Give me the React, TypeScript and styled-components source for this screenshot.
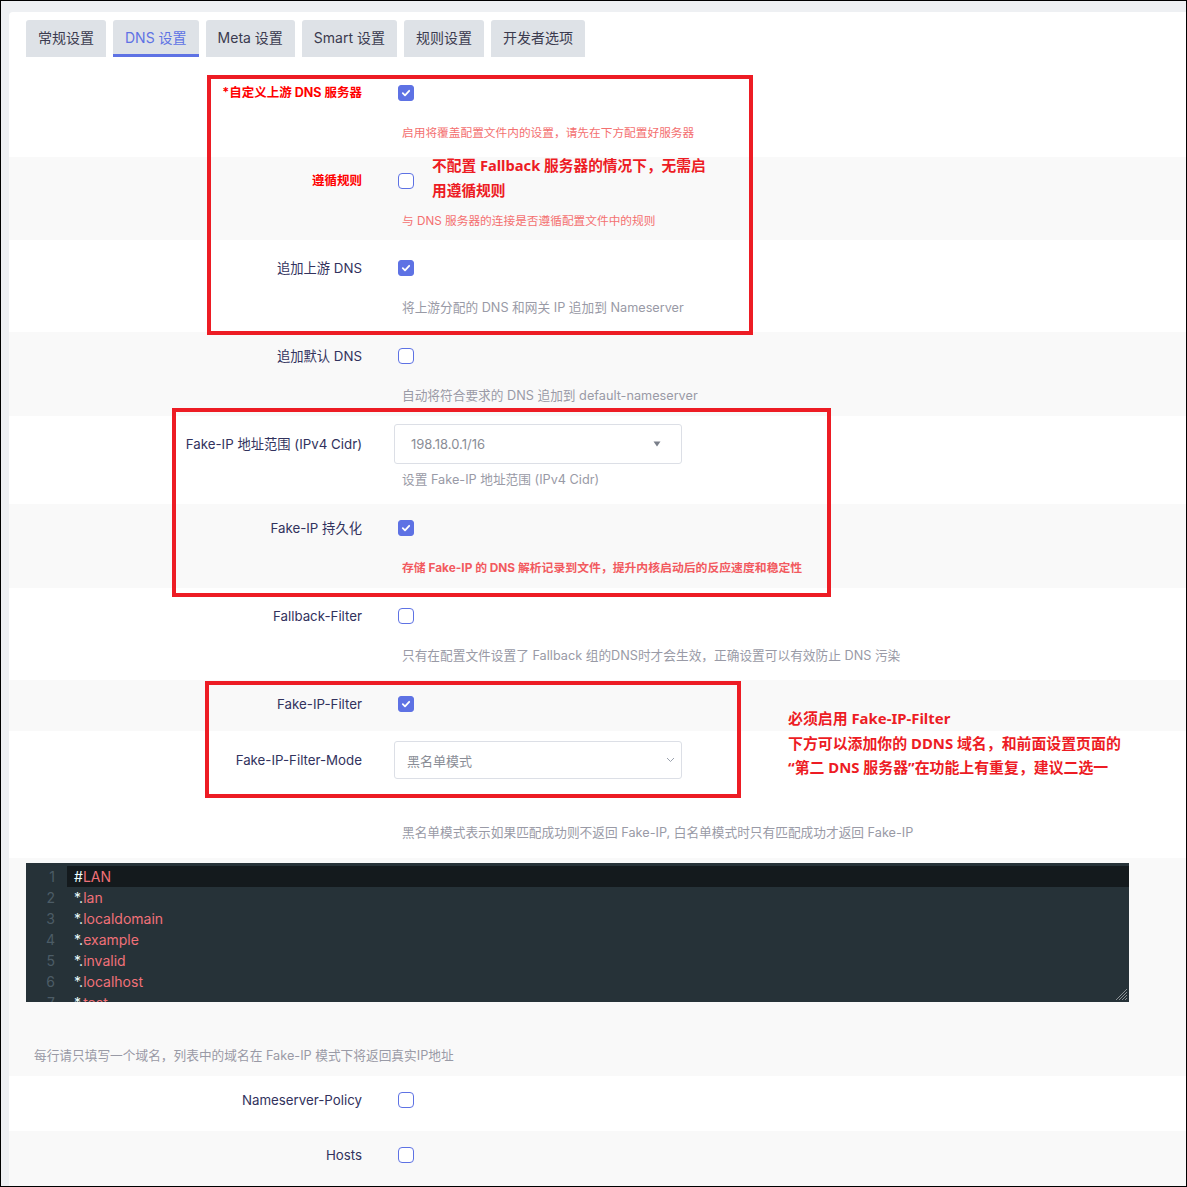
import styled, { createGlobalStyle } from "styled-components";

const GlobalStyle = createGlobalStyle`
  html, body {
    margin: 0;
    padding: 0;
  }
  body {
    font-family: Inter, "Noto Sans CJK SC", sans-serif;
    background: #fff;
  }
`;

const Frame = styled.div`
  position: relative;
  box-sizing: border-box;
  width: 1187px;
  height: 1187px;
  overflow: hidden;
  border: 1px solid #000;
  background: #eef0f3;
  padding: 11px 0 0 8px;
`;

const Card = styled.div`
  background: #fff;
  border-top-left-radius: 4px;
  padding-top: 8px;
  min-height: 100%;
`;

const Tabs = styled.div`
  display: flex;
  gap: 7px;
  padding: 0 17px;
`;

const Tab = styled.div<{ $active?: boolean }>`
  box-sizing: border-box;
  height: 37px;
  display: flex;
  align-items: center;
  padding: 0 12px 3px;
  background: #dee2e7;
  border-radius: 3px 3px 0 0;
  font-size: 14px;
  color: ${(p) => (p.$active ? "#5e72e4" : "#3b3b4f")};
  box-shadow: ${(p) => (p.$active ? "inset 0 -3px 0 #5e72e4" : "none")};
`;

const Rows = styled.div`
  & > *:nth-child(even) {
    background: #f9f9f9;
  }
`;

const Row = styled.div<{ $pt: number; $h: number }>`
  box-sizing: border-box;
  height: ${(p) => p.$h}px;
  padding-top: ${(p) => p.$pt}px;
  display: grid;
  grid-template-columns: 353px 1fr;
  column-gap: 32px;
  align-items: start;
`;

const Label = styled.div<{ $line?: number; $alert?: boolean }>`
  text-align: right;
  white-space: nowrap;
  font-size: ${(p) => (p.$alert ? 12.5 : 13.3)}px;
  line-height: ${(p) => p.$line ?? 24}px;
  color: ${(p) => (p.$alert ? "#ff0000" : "#32325d")};
  font-weight: ${(p) => (p.$alert ? 700 : 400)};
`;

const Field = styled.div`
  display: flex;
  flex-direction: column;
  align-items: flex-start;
`;

const CheckLine = styled.div`
  height: 24px;
  display: flex;
  align-items: center;
  padding-left: 4px;
`;

const Box = styled.span<{ $on?: boolean }>`
  box-sizing: border-box;
  width: 16px;
  height: 16px;
  border-radius: ${(p) => (p.$on ? 3 : 4)}px;
  background: ${(p) => (p.$on ? "#5e72e4" : "#fff")};
  border: 1px solid #5e72e4;
  display: flex;
  align-items: center;
  justify-content: center;
`;

type Tone = "gray" | "red" | "strong";

const toneColor: Record<Tone, string> = {
  gray: "#999aa6",
  red: "#f47070",
  strong: "#f25a5f",
};

const toneSize: Record<Tone, number> = {
  gray: 12.7,
  red: 11.7,
  strong: 11.85,
};

const Desc = styled.div<{ $mt?: number; $tone?: Tone }>`
  margin-top: ${(p) => p.$mt ?? 20}px;
  padding-left: 8px;
  font-size: ${(p) => toneSize[p.$tone ?? "gray"]}px;
  line-height: 16px;
  white-space: nowrap;
  color: ${(p) => toneColor[p.$tone ?? "gray"]};
  font-weight: ${(p) => (p.$tone === "strong" ? 700 : 400)};
`;

const Combo = styled.div<{ $h: number; $pl: number; $pr: number }>`
  box-sizing: border-box;
  width: 288px;
  height: ${(p) => p.$h}px;
  border: 1px solid #dcdfe6;
  border-radius: 3px;
  background: #fff;
  display: flex;
  align-items: center;
  justify-content: space-between;
  padding: 0 ${(p) => p.$pr}px 0 ${(p) => p.$pl}px;
  font-size: 13px;
  color: #8a8d96;
`;

const EditorSection = styled.div`
  box-sizing: border-box;
  height: 218px;
  padding: 5px 0 0 17px;
`;

const Editor = styled.div`
  position: relative;
  box-sizing: border-box;
  width: 1103px;
  height: 139px;
  background: #263238;
  padding-top: 3px;
  overflow: hidden;
  font-family: Inter, sans-serif;
  font-size: 14px;
`;

const CodeLine = styled.div`
  display: flex;
  height: 21px;
  line-height: 21px;
`;

const Gutter = styled.span`
  box-sizing: border-box;
  width: 41px;
  flex: none;
  padding-right: 12px;
  text-align: right;
  color: #4c5c66;
`;

const Code = styled.span<{ $active?: boolean }>`
  flex: 1;
  padding-left: 7px;
  color: #f07178;
  background: ${(p) => (p.$active ? "#141a1d" : "transparent")};
`;

const Punct = styled.span`
  color: #eeffff;
`;

const Grip = styled.svg`
  position: absolute;
  right: 1px;
  bottom: 1px;
`;

const Hint = styled.div`
  margin-top: 46px;
  padding-left: 8px;
  font-size: 12.7px;
  line-height: 16px;
  color: #999aa6;
`;

const Mark = styled.div<{ $x: number; $y: number; $w: number; $h: number }>`
  position: absolute;
  left: ${(p) => p.$x}px;
  top: ${(p) => p.$y}px;
  width: ${(p) => p.$w}px;
  height: ${(p) => p.$h}px;
  box-sizing: border-box;
  border: 4px solid #ed1c24;
  pointer-events: none;
`;

const Note = styled.div<{ $x: number; $y: number; $size: number; $line: number }>`
  position: absolute;
  left: ${(p) => p.$x}px;
  top: ${(p) => p.$y}px;
  font-family: "Noto Sans", "Noto Sans CJK SC", sans-serif;
  font-weight: 700;
  font-size: ${(p) => p.$size}px;
  line-height: ${(p) => p.$line}px;
  color: #ed1c24;
  white-space: nowrap;
`;

function Check({ on }: { on?: boolean }) {
  return (
    <CheckLine>
      <Box $on={on}>
        {on && (
          <svg width="10" height="10" viewBox="0 0 10 10">
            <path d="M1.8 5.2 L4 7.3 L8.2 2.8" fill="none" stroke="#fff" strokeWidth="1.8" strokeLinecap="round" strokeLinejoin="round" />
          </svg>
        )}
      </Box>
    </CheckLine>
  );
}

const codeLines = [
  ["#", "LAN"],
  ["*.", "lan"],
  ["*.", "localdomain"],
  ["*.", "example"],
  ["*.", "invalid"],
  ["*.", "localhost"],
  ["*.", "test"],
];

const tabs = ["常规设置", "DNS 设置", "Meta 设置", "Smart 设置", "规则设置", "开发者选项"];

export default function App() {
  return (
    <>
      <GlobalStyle />
      <Frame>
        <Card>
          <Tabs>
            {tabs.map((t) => (
              <Tab key={t} $active={t === "DNS 设置"}>
                {t}
              </Tab>
            ))}
          </Tabs>
          <Rows>
            <Row $pt={24} $h={100}>
              <Label $alert>*自定义上游 DNS 服务器</Label>
              <Field>
                <Check on />
                <Desc $tone="red">启用将覆盖配置文件内的设置，请先在下方配置好服务器</Desc>
              </Field>
            </Row>
            <Row $pt={12} $h={83}>
              <Label $alert>遵循规则</Label>
              <Field>
                <Check />
                <Desc $tone="red">与 DNS 服务器的连接是否遵循配置文件中的规则</Desc>
              </Field>
            </Row>
            <Row $pt={16} $h={92}>
              <Label>追加上游 DNS</Label>
              <Field>
                <Check on />
                <Desc>将上游分配的 DNS 和网关 IP 追加到 Nameserver</Desc>
              </Field>
            </Row>
            <Row $pt={12} $h={84}>
              <Label>追加默认 DNS</Label>
              <Field>
                <Check />
                <Desc>自动将符合要求的 DNS 追加到 default-nameserver</Desc>
              </Field>
            </Row>
            <Row $pt={8} $h={88}>
              <Label $line={40}>Fake-IP 地址范围 (IPv4 Cidr)</Label>
              <Field>
                <Combo $h={40} $pl={16} $pr={20}>
                  <span>198.18.0.1/16</span>
                  <svg width="8" height="6" viewBox="0 0 8 6">
                    <path d="M0.5 0.5 H7.5 L4 5.5 Z" fill="#7a7f8a" />
                  </svg>
                </Combo>
                <Desc $mt={8}>设置 Fake-IP 地址范围 (IPv4 Cidr)</Desc>
              </Field>
            </Row>
            <Row $pt={12} $h={84}>
              <Label>Fake-IP 持久化</Label>
              <Field>
                <Check on />
                <Desc $tone="strong">存储 Fake-IP 的 DNS 解析记录到文件，提升内核启动后的反应速度和稳定性</Desc>
              </Field>
            </Row>
            <Row $pt={16} $h={92}>
              <Label>Fallback-Filter</Label>
              <Field>
                <Check />
                <Desc>只有在配置文件设置了 Fallback 组的DNS时才会生效，正确设置可以有效防止 DNS 污染</Desc>
              </Field>
            </Row>
            <Row $pt={12} $h={51}>
              <Label>Fake-IP-Filter</Label>
              <Field>
                <Check on />
              </Field>
            </Row>
            <Row $pt={10} $h={127}>
              <Label $line={38}>Fake-IP-Filter-Mode</Label>
              <Field>
                <Combo $h={38} $pl={12} $pr={6}>
                  <span>黑名单模式</span>
                  <svg width="9" height="6" viewBox="0 0 9 6">
                    <path d="M1 1 L4.5 4.5 L8 1" fill="none" stroke="#9aa1ad" strokeWidth="1" />
                  </svg>
                </Combo>
                <Desc $mt={46}>黑名单模式表示如果匹配成功则不返回 Fake-IP, 白名单模式时只有匹配成功才返回 Fake-IP</Desc>
              </Field>
            </Row>
            <EditorSection>
              <Editor>
                {codeLines.map(([p, rest], i) => (
                  <CodeLine key={i}>
                    <Gutter>{i + 1}</Gutter>
                    <Code $active={i === 0}>
                      <Punct>{p}</Punct>
                      {rest}
                    </Code>
                  </CodeLine>
                ))}
                <Grip width="12" height="12" viewBox="0 0 12 12">
                  <path d="M11 3 L3 11 M11 6 L6 11 M11 9 L9 11 M11 0 L0 11" stroke="#8a9094" strokeWidth="1" />
                </Grip>
              </Editor>
              <Hint>每行请只填写一个域名，列表中的域名在 Fake-IP 模式下将返回真实IP地址</Hint>
            </EditorSection>
            <Row $pt={12} $h={55}>
              <Label>Nameserver-Policy</Label>
              <Field>
                <Check />
              </Field>
            </Row>
            <Row $pt={12} $h={56}>
              <Label>Hosts</Label>
              <Field>
                <Check />
              </Field>
            </Row>
          </Rows>
        </Card>
        <Mark $x={206} $y={74} $w={546} $h={260} />
        <Mark $x={171} $y={407} $w={659} $h={189} />
        <Mark $x={204} $y={680} $w={536} $h={117} />
        <Note $x={431} $y={152} $size={14.7} $line={25}>
          <div>不配置 Fallback 服务器的情况下，无需启</div>
          <div>用遵循规则</div>
        </Note>
        <Note $x={787} $y={705} $size={14.9} $line={24.5}>
          <div>必须启用 Fake-IP-Filter</div>
          <div>下方可以添加你的 DDNS 域名，和前面设置页面的</div>
          <div>“第二 DNS 服务器”在功能上有重复，建议二选一</div>
        </Note>
      </Frame>
    </>
  );
}
